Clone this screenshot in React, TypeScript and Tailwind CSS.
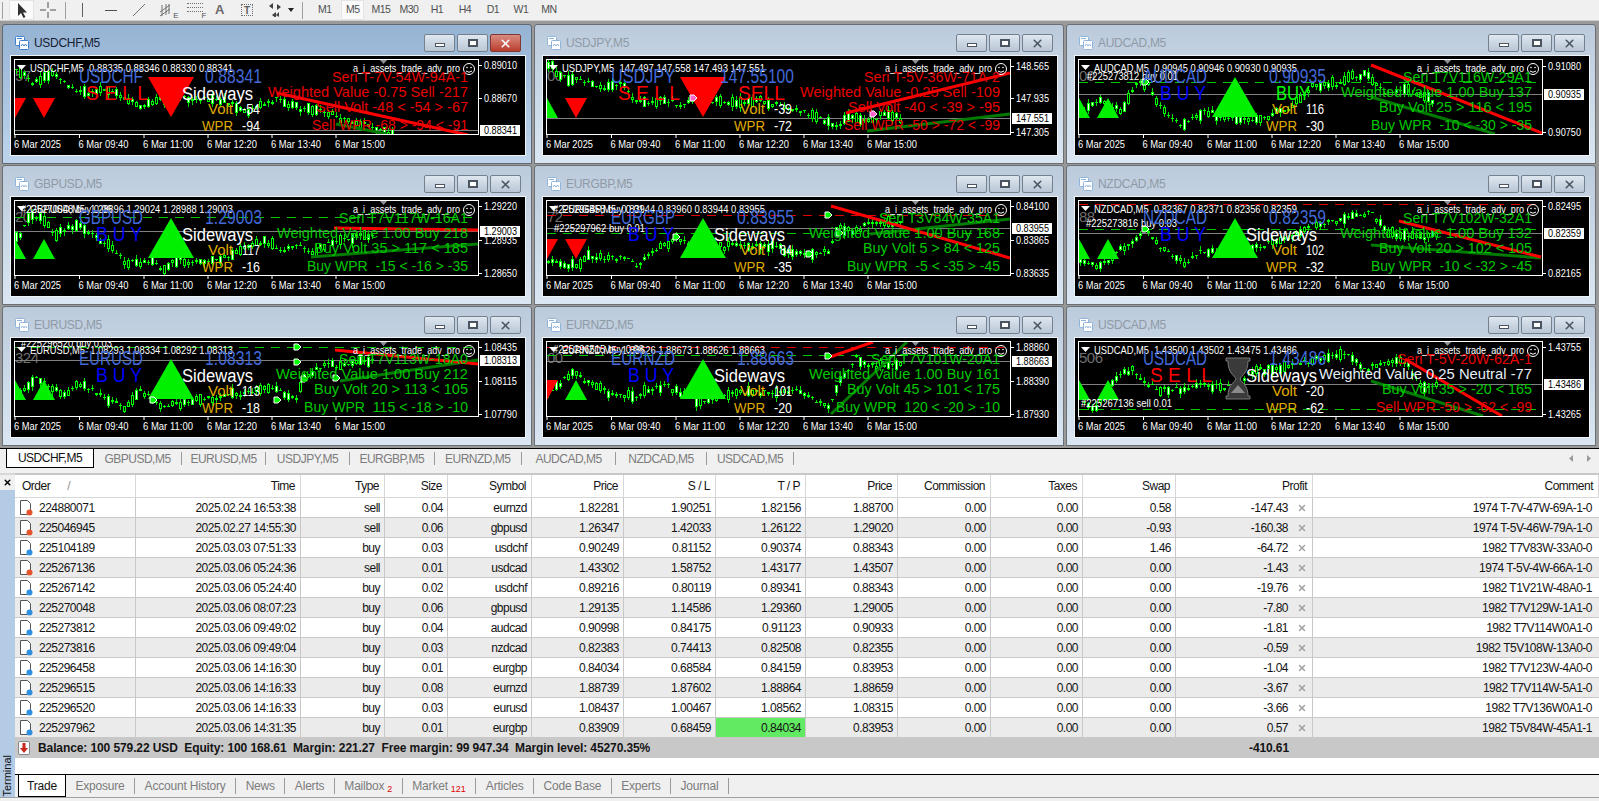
import { X } from 'lucide-react';

const RED = '#e80000';
const BUYG = '#00c800';
const GOLD = '#e0ac00';
const ROYAL = '#4169d8';
const FONT = '"Liberation Sans", Arial, sans-serif';

type Pt = [number, number];
type Line = [string, string, number];
type Seg = [number, number, number, number];
type Mark = [number, number, string];

type ChartData = {
  sym: string;
  ohlc: string;
  price: string;
  priceX?: number;
  side: 'buy' | 'sell';
  big: 'up' | 'down' | 'glass';
  small: ['up' | 'down', number, number][];
  mid?: string;
  volt: string;
  wpr: string;
  lines: Line[];
  red: Seg;
  green: Seg;
  last: number;
  dashed: [number, string][];
  axis: [string, number][];
  tag: string;
  notes: [string, number, number][];
  marks?: Mark[];
  pts: Pt[];
  seed: number;
  active?: boolean;
};

const times = ['6 Mar 2025', '6 Mar 09:40', '6 Mar 11:00', '6 Mar 12:20', '6 Mar 13:40', '6 Mar 15:00'];
const timeX = [3, 67.5, 132, 196, 260, 324];

const charts: ChartData[] = [
  {
    sym: 'USDCHF', ohlc: '0.88335 0.88346 0.88330 0.88341', price: '0.88341', side: 'sell', big: 'down', active: true,
    small: [['down', -7, 42], ['down', 22, 42]], mid: 'Sideways', volt: '-54', wpr: '-94',
    lines: [['Seri T-7V-54W-94A-1', RED, 321], ['Weighted Value -0.75 Sell -217', RED, 257], ['Sell Volt -48 < -54 > -67', RED, 305], ['Sell WPR -68 > -94 < -91', RED, 301]],
    red: [266, 37, 457, 79], green: [325, 68, 376, 78], last: 74, dashed: [],
    axis: [['0.89010', 9], ['0.88670', 42]], tag: '57', notes: [], seed: 11,
    pts: [[5, 13], [21, 28], [43, 17], [57, 33], [75, 37], [96, 35], [132, 52], [143, 42], [175, 42], [210, 45], [235, 57], [264, 43], [285, 52], [310, 55], [328, 63], [360, 72], [382, 78]],
  },
  {
    sym: 'USDJPY', ohlc: '147.497 147.558 147.493 147.551', price: '147.55100', priceX: 177, side: 'sell', big: 'down',
    small: [['up', -7, 42], ['down', 22, 42]], mid: 'SELL', volt: '-39', wpr: '-72',
    lines: [['Seri T-5V-36W-71A-2', RED, 321], ['Weighted Value -0.25 Sell -109', RED, 257], ['Sell Volt -40 < -39 > -95', RED, 305], ['Sell WPR -50 > -72 < -99', RED, 301]],
    red: [303, 57, 467, 17], green: [324, 75, 467, 58], last: 62, dashed: [],
    axis: [['148.565', 10], ['147.935', 42], ['147.305', 76]], tag: '00', notes: [], seed: 23,
    marks: [[150, 42, '#ff66cc'], [330, 58, '#ff66cc']],
    pts: [[8, 12], [22, 23], [42, 27], [60, 32], [80, 28], [91, 45], [125, 45], [137, 52], [149, 42], [173, 45], [218, 45], [252, 53], [277, 63], [294, 70], [304, 62], [325, 65], [342, 55], [359, 65]],
  },
  {
    sym: 'AUDCAD', ohlc: '0.90945 0.90946 0.90930 0.90935', price: '0.90935', side: 'buy', big: 'up',
    small: [['up', -7, 42], ['up', 22, 42]], mid: 'BUY', volt: '116', wpr: '-30',
    lines: [['Seri T7V116W-29A1', BUYG, 328], ['Weighted Value 1.00 Buy 137', BUYG, 266], ['Buy Volt 25 > 116 < 195', BUYG, 304], ['Buy WPR  -10 < -30 > -35', BUYG, 296]],
    red: [296, 9, 467, 77], green: [296, 41, 420, 78], last: 38, dashed: [[26, '#00c800']],
    axis: [['0.91080', 10], ['0.90750', 76]], tag: '00', notes: [['#225273812 buy 0.01', 12, 24]], seed: 37,
    marks: [[70, 26, '#00ff00']],
    pts: [[4, 58], [22, 45], [47, 55], [58, 28], [72, 28], [83, 50], [108, 70], [126, 55], [151, 62], [186, 62], [215, 52], [236, 30], [261, 28], [268, 22], [290, 18], [307, 37], [329, 35], [358, 45]],
  },
  {
    sym: 'GBPUSD', ohlc: '1.28896 1.29024 1.28988 1.29003', price: '1.29003', side: 'buy', big: 'up',
    small: [['up', -7, 42], ['up', 22, 42]], mid: 'Sideways', volt: '117', wpr: '-16',
    lines: [['Seri T7V117W-16A1', BUYG, 328], ['Weighted Value 1.00 Buy 218', BUYG, 266], ['Buy Volt 35 > 117 < 185', BUYG, 303], ['Buy WPR  -15 < -16 > -35', BUYG, 296]],
    red: [323, 31, 467, 33], green: [300, 60, 467, 47], last: 34, dashed: [[20, '#00c800']],
    axis: [['1.29220', 9], ['1.28935', 43], ['1.28650', 76]], tag: '20', notes: [['#225270048 buy 0.06', 10, 16]], seed: 41,
    pts: [[6, 39], [19, 19], [33, 24], [40, 37], [70, 29], [84, 41], [101, 51], [114, 66], [134, 64], [151, 72], [165, 62], [185, 67], [209, 61], [232, 52], [253, 44], [270, 54], [290, 49], [300, 57], [327, 41], [361, 39]],
  },
  {
    sym: 'EURGBP', ohlc: '0.83944 0.83960 0.83944 0.83955', price: '0.83955', side: 'buy', big: 'up',
    small: [['down', -7, 42], ['down', 22, 42]], mid: 'Sideways', volt: '84', wpr: '-35',
    lines: [['Seri T3V84W-35A1', BUYG, 336], ['Weighted Value 1.00 Buy 168', BUYG, 266], ['Buy Volt 5 > 84 < 125', BUYG, 320], ['Buy WPR  -5 < -35 > -45', BUYG, 304]],
    red: [288, 9, 467, 61], green: [327, 37, 467, 22], last: 31, dashed: [[18, '#e00000'], [36, '#00c800']],
    axis: [['0.84100', 9], ['0.83865', 43], ['0.83635', 76]], tag: '72', notes: [['#225296458 buy 0.01', 10, 16], ['#225297962 buy 0.01', 11, 35]], seed: 53,
    marks: [[133, 40, '#00ff00'], [285, 18, '#00ff00'], [296, 36, '#00ff00'], [266, 57, '#00ff00']],
    pts: [[4, 64], [31, 69], [44, 59], [82, 61], [95, 69], [105, 57], [132, 41], [142, 47], [180, 49], [230, 49], [251, 57], [284, 55], [293, 31], [312, 34], [328, 26], [359, 26]],
  },
  {
    sym: 'NZDCAD', ohlc: '0.82367 0.82371 0.82356 0.82359', price: '0.82359', side: 'buy', big: 'up',
    small: [['up', -7, 42], ['up', 22, 42]], mid: 'Sideways', volt: '102', wpr: '-32',
    lines: [['Seri T7V102W-32A1', BUYG, 328], ['Weighted Value 1.00 Buy 132', BUYG, 265], ['Buy Volt 20 > 102 < 105', BUYG, 304], ['Buy WPR  -10 < -32 > -45', BUYG, 296]],
    red: [324, 24, 466, 60], green: [296, 48, 466, 61], last: 36, dashed: [[7, '#e00000'], [32, '#00c800']],
    axis: [['0.82495', 9], ['0.82165', 76]], tag: '88', notes: [['#225273816 buy 0.03', 11, 30]], seed: 67,
    marks: [[70, 32, '#00ff00']],
    pts: [[4, 66], [19, 69], [33, 62], [54, 46], [71, 32], [85, 51], [109, 66], [126, 54], [178, 51], [212, 41], [236, 27], [270, 22], [296, 16], [312, 37], [343, 41], [363, 36]],
  },
  {
    sym: 'EURUSD', ohlc: '1.08293 1.08334 1.08292 1.08313', price: '1.08313', side: 'buy', big: 'up',
    small: [['up', -7, 42], ['up', 22, 42]], mid: 'Sideways', volt: '113', wpr: '-18',
    lines: [['Seri T7V113W-18A0', BUYG, 328], ['Weighted Value 1.00 Buy 212', BUYG, 265], ['Buy Volt 20 > 113 < 105', BUYG, 303], ['Buy WPR  115 < -18 > -10', BUYG, 293]],
    red: [324, 12, 467, 26], green: [329, 43, 467, 22], last: 22, dashed: [[9, '#00c800']],
    axis: [['1.08435', 9], ['1.08115', 43], ['1.07790', 76]], tag: '324', notes: [['#225296520 buy 0.03', 10, 9]], seed: 71,
    marks: [[286, 9, '#00ff00'], [286, 24, '#00ff00'], [293, 41, '#00ff00'], [325, 40, '#00ff00'], [142, 62, '#00ff00'], [266, 62, '#00ff00']],
    pts: [[6, 56], [23, 40], [33, 46], [50, 56], [70, 46], [101, 63], [114, 70], [128, 53], [151, 68], [192, 61], [226, 56], [259, 51], [286, 61], [290, 40], [313, 26], [327, 30], [361, 20]],
  },
  {
    sym: 'EURNZD', ohlc: '1.88626 1.88673 1.88626 1.88663', price: '1.88663', side: 'buy', big: 'up',
    small: [['down', -7, 42], ['up', 22, 42]], mid: 'Sideways', volt: '101', wpr: '-20',
    lines: [['Seri T7V101W-20A1', BUYG, 328], ['Weighted Value 1.00 Buy 161', BUYG, 266], ['Buy Volt 45 > 101 < 175', BUYG, 304], ['Buy WPR  120 < -20 > -10', BUYG, 293]],
    red: [287, 19, 330, 4], green: [288, 76, 364, 4], last: 23, dashed: [[9, '#e00000'], [17, '#00c800']],
    axis: [['1.88860', 9], ['1.88390', 43], ['1.87930', 76]], tag: '00', notes: [['#225296515 buy 0.08', 10, 15]], seed: 83,
    marks: [[285, 18, '#00ff00']],
    pts: [[14, 46], [28, 35], [51, 48], [68, 56], [95, 60], [105, 50], [122, 48], [156, 63], [190, 55], [257, 54], [284, 70], [291, 51], [312, 20], [328, 28], [359, 25]],
  },
  {
    sym: 'USDCAD', ohlc: '1.43500 1.43502 1.43475 1.43486', price: '1.43486', side: 'sell', big: 'glass',
    small: [['up', -7, 42], ['up', 22, 42]], mid: 'Sideways', volt: '-20', wpr: '-62',
    lines: [['Seri T-5V-20W-62A-1', RED, 322], ['Weighted Value 0.25 Neutral -77', '#e6eef8', 244], ['Buy Volt 35 > -20 < 165', BUYG, 307], ['Sell WPR -50 > -62 < -99', RED, 301]],
    red: [330, 21, 427, 78], green: [296, 43, 408, 78], last: 46, dashed: [[71, '#00c800']],
    axis: [['1.43755', 9], ['1.43265', 76]], tag: '506', notes: [['#225267136 sell 0.01', 6, 69]], seed: 97,
    pts: [[6, 62], [19, 72], [37, 41], [57, 31], [71, 48], [92, 53], [122, 48], [157, 48], [177, 33], [226, 26], [267, 13], [288, 31], [301, 27], [329, 23], [343, 48], [363, 48]],
  },
];

function Candles({ pts, seed }: { pts: Pt[]; seed: number }) {
  let s = seed;
  const rnd = () => {
    s = (s * 16807) % 2147483647;
    return (s % 1000) / 1000;
  };
  const at = (x: number) => {
    for (let i = 1; i < pts.length; i++) {
      if (x <= pts[i][0]) {
        const [x0, y0] = pts[i - 1];
        const [x1, y1] = pts[i];
        return y0 + ((x - x0) / (x1 - x0)) * (y1 - y0);
      }
    }
    return pts[pts.length - 1][1];
  };
  const bars = [];
  for (let x = 4; x <= pts[pts.length - 1][0]; x += 4) {
    const y = at(x) + (rnd() - 0.5) * 5;
    const r = rnd();
    const len = 1 + r * r * 10;
    const up = rnd() > 0.45;
    const top = Math.round(y - len / 2);
    const h = Math.max(1, Math.round(len));
    const hi = top - Math.round(rnd() * 4);
    const lo = top + h + Math.round(rnd() * 4);
    bars.push(
      <g key={x}>
        <rect x={x + 1} y={hi} width={1} height={lo - hi} fill="#00e000" />
        <rect x={x} y={top} width={3} height={h} fill="#00ff00" />
        {h > 2 && <rect x={x + 1} y={top + 1} width={1} height={h - 2} fill={up ? '#ffffff' : '#000000'} />}
      </g>
    );
  }
  return <g shapeRendering="crispEdges">{bars}</g>;
}

function Label(props: { x: number; y: number; w: number; size: number; fill: string; children: string }) {
  return (
    <text
      x={props.x}
      y={props.y}
      textLength={props.w}
      lengthAdjust="spacingAndGlyphs"
      fontSize={props.size}
      fill={props.fill}
      className="whitespace-pre tracking-normal"
      style={{ fontFamily: FONT }}
    >
      {props.children}
    </text>
  );
}

function Tri({ dir, x, y, w, h }: { dir: 'up' | 'down'; x: number; y: number; w: number; h: number }) {
  const pts = dir === 'up' ? `${x},${y + h} ${x + w / 2},${y} ${x + w},${y + h}` : `${x},${y} ${x + w},${y} ${x + w / 2},${y + h}`;
  return <polygon points={pts} fill={dir === 'up' ? '#00f000' : '#ff0000'} />;
}

function Chart({ d }: { d: ChartData }) {
  const clip = `plot-${d.sym}`;
  const buy = d.side === 'buy';
  return (
    <svg width={514} height={99} viewBox="0 0 514 99" className="block bg-black outline outline-[#eef3f8]">
      <defs>
        <clipPath id={clip}>
          <rect x={4} y={3} width={463} height={75} />
        </clipPath>
      </defs>
      <g clipPath={`url(#${clip})`}>
        <text x={4} y={25} fontSize={15} fill="#6f6f6f" style={{ fontFamily: FONT }}>{d.tag}</text>
        <line x1={4} x2={467} y1={d.last + 0.5} y2={d.last + 0.5} stroke="#808080" />
        {d.dashed.map(([y, c]) => (
          <line key={y} x1={4} x2={467} y1={y + 0.5} y2={y + 0.5} stroke={c} strokeDasharray="9 7" />
        ))}
        <Candles pts={d.pts} seed={d.seed} />
        <line x1={d.green[0]} y1={d.green[1]} x2={d.green[2]} y2={d.green[3]} stroke="#007a00" strokeWidth={3} />
        <line x1={d.red[0]} y1={d.red[1]} x2={d.red[2]} y2={d.red[3]} stroke="#ff0000" strokeWidth={3} />
        {d.small.map(([dir, x, y], i) => (
          <Tri key={i} dir={dir} x={x} y={y} w={22} h={20} />
        ))}
        {d.big === 'glass' ? (
          <g fill="#3a3a3a" stroke="#777777" strokeWidth={1}>
            <path d="M151 20h24v3h-2c0 12-6 14-8 18 2 4 8 6 8 17h2v3h-24v-3h2c0-11 6-13 8-17-2-4-8-6-8-18h-2z" />
            <path d="M156 55l7-8 7 8z" fill="#8a8a8a" stroke="none" />
          </g>
        ) : (
          <Tri dir={d.big} x={137} y={21} w={46} h={40} />
        )}
        <polygon points="6,9 15,9 10.5,14" fill="#ffffff" />
        {d.marks?.map(([x, y, c], i) => (
          <polygon key={i} points={`${x - 3},${y - 3} ${x + 1},${y - 3} ${x + 4},${y} ${x + 1},${y + 3} ${x - 3},${y + 3}`} fill={c} stroke="#ffffff" />
        ))}
        {d.notes.map(([t, x, y]) => (
          <Label key={t} x={x} y={y} w={91} size={11} fill="#ffffff">{t}</Label>
        ))}
        <Label x={19} y={16} w={203} size={11} fill="#ffffff">{`${d.sym},M5  ${d.ohlc}`}</Label>
        <Label x={342} y={16} w={107} size={11} fill="#ffffff">a_i_assets_trade_adv_pro</Label>
        <polygon points="368,3 377,3 372.5,8" fill="#8a9098" />
        <rect x={448} y={3} width={2} height={1} fill="#ff3090" />
        <circle cx={458} cy={13} r={5.5} fill="none" stroke="#ffffff" />
        <circle cx={456} cy={11.5} r={0.8} fill="#ffffff" />
        <circle cx={460} cy={11.5} r={0.8} fill="#ffffff" />
        <path d="M455 15q3 2.5 6 0" fill="none" stroke="#ffffff" />

        <Label x={68} y={27} w={64} size={20} fill={ROYAL}>{d.sym}</Label>
        <Label x={d.priceX ?? 194} y={27} w={d.priceX ? 74 : 57} size={20} fill={ROYAL}>{d.price}</Label>
        {buy ? (
          <Label x={85} y={44} w={46} size={20} fill="#0000ff">B U Y</Label>
        ) : (
          <Label x={75} y={44} w={62} size={20} fill="#ff0000">S E L L</Label>
        )}
        {d.mid === 'Sideways' && <Label x={171} y={44} w={71} size={18} fill="#ffffff">Sideways</Label>}
        {d.mid === 'SELL' && <Label x={195} y={44} w={47} size={20} fill="#ff0000">SELL</Label>}
        {d.mid === 'BUY' && <Label x={201} y={44} w={34} size={20} fill="#00ff00">BUY</Label>}
        <Label x={197} y={58} w={25} size={15} fill={GOLD}>Volt</Label>
        <Label x={249 - d.volt.length * 6} y={58} w={d.volt.length * 6} size={15} fill="#ffffff">{d.volt}</Label>
        <Label x={191} y={75} w={31} size={15} fill={GOLD}>WPR</Label>
        <Label x={249 - d.wpr.length * 6} y={75} w={d.wpr.length * 6} size={15} fill="#ffffff">{d.wpr}</Label>
        {d.lines.map(([t, c, x], i) => (
          <Label key={i} x={x} y={[26, 41, 55.5, 74][i]} w={457 - x} size={15} fill={c}>{t}</Label>
        ))}
      </g>
      <rect x={3.5} y={3.5} width={464} height={75} fill="none" stroke="#ffffff" />
      {timeX.map((x, i) => (
        <g key={x}>
          <line x1={x + 1} x2={x + 1} y1={79} y2={82} stroke="#ffffff" />
          <Label x={x} y={92} w={i === 0 ? 47 : 50} size={11} fill="#ffffff">{times[i]}</Label>
        </g>
      ))}
      {d.axis.map(([t, y]) => (
        <g key={t}>
          <line x1={468} x2={471} y1={y + 0.5} y2={y + 0.5} stroke="#ffffff" />
          <Label x={473} y={y + 4} w={33} size={11} fill="#ffffff">{t}</Label>
        </g>
      ))}
      <rect x={469} y={d.last - 5} width={40} height={11} fill="#ffffff" />
      <Label x={473} y={d.last + 4} w={33} size={11} fill="#000000">{d.price.slice(0, 7)}</Label>
    </svg>
  );
}

function WinIcon({ active }: { active?: boolean }) {
  const c = active ? '#3d7fd0' : '#8fb4dc';
  return (
    <svg width={14} height={14} viewBox="0 0 14 14" className="shrink-0">
      <rect x={0.5} y={0.5} width={9} height={9} rx={1} fill="#ffffff" stroke={c} />
      <rect x={4.5} y={4.5} width={9} height={9} rx={1} fill="#ffffff" stroke={c} />
      <path d="M6 10l1.5-2 1.5 2 1.5-2 1.5 2" fill="none" stroke={c} />
      <path d="M2 2.5h5" stroke={c} />
    </svg>
  );
}

function WinButton({ kind, active }: { kind: 'min' | 'max' | 'close'; active?: boolean }) {
  const red = kind === 'close' && active;
  return (
    <div
      className={
        red
          ? 'w-[31px] h-[18px] flex items-center justify-center rounded-[2px] border border-[#7d3a34] bg-linear-to-b from-[#d98a7f] to-[#b93c2e]'
          : 'w-[31px] h-[18px] flex items-center justify-center rounded-[2px] border border-[#75808d] bg-linear-to-b from-[#dfe7f0] to-[#b9c6d5]'
      }
    >
      {kind === 'min' && <div className="w-[10px] h-[4px] mt-[4px] bg-white border border-[#4a5561]" />}
      {kind === 'max' && <div className="w-[10px] h-[8px] bg-white border-2 border-[#4a5561]" />}
      {kind === 'close' && <X size={13} strokeWidth={3} className={red ? 'text-white' : 'text-[#4a5561]'} />}
    </div>
  );
}

function ChartWindow({ d }: { d: ChartData }) {
  return (
    <div
      className={
        d.active
          ? 'h-[140px] flex flex-col border border-[#5f6770] rounded-t-[3px] bg-linear-to-b from-[#96b3d3] to-[#bdd4ec] pl-[8px] pr-[6px] pb-[8px]'
          : 'h-[140px] flex flex-col border border-[#6a6f75] rounded-t-[3px] bg-linear-to-b from-[#bccbdc] to-[#dae6f2] pl-[8px] pr-[6px] pb-[8px]'
      }
    >
      <div className="h-[31px] flex items-center gap-[5px] pl-[4px] pr-[4px] pb-[3px] pt-[8px]">
        <WinIcon active={d.active} />
        <span className={d.active ? 'text-[12px] tracking-[-0.3px] text-[#152033]' : 'text-[12px] tracking-[-0.3px] text-[#8f9aa6]'}>{d.sym},M5</span>
        <div className="ml-auto flex gap-[2px]">
          <WinButton kind="min" />
          <WinButton kind="max" />
          <WinButton kind="close" active={d.active} />
        </div>
      </div>
      <Chart d={d} />
    </div>
  );
}

function Toolbar() {
  const periods = ['M1', 'M5', 'M15', 'M30', 'H1', 'H4', 'D1', 'W1', 'MN'];
  return (
    <div className="h-[21px] shrink-0 flex items-center bg-[#f0f0f0] text-[#505050] border-b border-[#d0d0d0]">
      <div className="w-[1px] h-[17px] ml-[2px] bg-[#a0a0a0]" />
      <div className="ml-[6px] w-[25px] h-[20px] flex items-center justify-center bg-[#fafafa] border border-[#e4e4e4]">
        <svg width={12} height={15} viewBox="0 0 12 15"><path d="M2 0v13l3-3 2.5 5 2-1-2.5-4.5h4z" fill="#303030" /></svg>
      </div>
      <svg width={16} height={16} viewBox="0 0 16 16" className="ml-[6px]"><path d="M8 0v6M8 10v6M0 8h6M10 8h6" stroke="#505050" /></svg>
      <div className="ml-[9px] w-[1px] h-[17px] bg-[#a0a0a0]" />
      <div className="ml-[16px] w-[1px] h-[14px] bg-[#606060]" />
      <div className="ml-[22px] w-[12px] h-[1px] bg-[#505050]" />
      <svg width={14} height={14} viewBox="0 0 14 14" className="ml-[15px]"><path d="M1 13L13 1" stroke="#707070" /></svg>
      <div className="ml-[13px] relative w-[16px] h-[14px]">
        <svg width={13} height={14} viewBox="0 0 13 14"><path d="M1 9l10-7M1 13L11 6M3 2v11M7 1v11M10 1v10" stroke="#707070" /></svg>
        <span className="absolute right-[-3px] bottom-[-3px] text-[8px] leading-none">E</span>
      </div>
      <div className="ml-[12px] relative w-[16px] h-[14px] border-t border-dotted border-[#707070]">
        <div className="mt-[3px] border-t border-dotted border-[#707070]" />
        <div className="mt-[3px] border-t border-dotted border-[#707070]" />
        <span className="absolute right-[-3px] bottom-[-3px] text-[8px] leading-none">F</span>
      </div>
      <span className="ml-[12px] text-[13px] font-bold text-[#6a6a6a]">A</span>
      <span className="ml-[17px] w-[12px] h-[12px] flex items-center justify-center border border-dotted border-[#707070] text-[10px] font-bold text-[#606060]">T</span>
      <svg width={14} height={14} viewBox="0 0 14 14" className="ml-[15px]"><path d="M1 3l4-3v6zM13 4l-4 3v-6zM4 12l4-3v6zM11 9l-3 3 3 2z" fill="#404040" /></svg>
      <svg width={6} height={4} viewBox="0 0 6 4" className="ml-[6px]"><path d="M0 0h6L3 4z" fill="#202020" /></svg>
      <div className="ml-[8px] w-[1px] h-[17px] bg-[#a0a0a0]" />
      <div className="ml-[8px] flex items-center text-[10.5px]">
        {periods.map((p) => (
          <div key={p} className={p === 'M5' ? 'w-[23px] mx-[2.5px] h-[20px] flex items-center justify-center bg-[#fafafa] border border-[#e4e4e4]' : 'w-[23px] mx-[2.5px] h-[20px] flex items-center justify-center'}>
            {p}
          </div>
        ))}
      </div>
    </div>
  );
}

function ChartTabs() {
  const tabs: [string, string][] = [
    ['GBPUSD,M5', 'w-[88px]'],
    ['EURUSD,M5', 'w-[84px]'],
    ['USDJPY,M5', 'w-[84px]'],
    ['EURGBP,M5', 'w-[84.5px]'],
    ['EURNZD,M5', 'w-[87.5px]'],
    ['AUDCAD,M5', 'w-[94px]'],
    ['NZDCAD,M5', 'w-[91px]'],
    ['USDCAD,M5', 'w-[87px]'],
  ];
  return (
    <div className="h-[25px] shrink-0 flex items-start bg-[#f0f0f0] border-t border-black">
      <div className="ml-[6px] w-[88px] h-[19px] flex items-center justify-center bg-white border-x border-b border-black text-[#111]">USDCHF,M5</div>
      {tabs.map(([t, w]) => (
        <div key={t} className={`${w} h-[19px] flex items-center justify-center`}>
          <span className="flex-1 text-center text-[#7c7c7c]">{t}</span>
          <span className="w-[1px] h-[13px] bg-[#9a9a9a]" />
        </div>
      ))}
      <div className="ml-auto mr-[8px] h-[19px] flex items-center gap-[14px]">
        <svg width={4} height={7} viewBox="0 0 4 7"><path d="M4 0v7L0 3.5z" fill="#9a9a9a" /></svg>
        <svg width={4} height={7} viewBox="0 0 4 7"><path d="M0 0v7l4-3.5z" fill="#9a9a9a" /></svg>
      </div>
    </div>
  );
}

const grid = 'grid grid-cols-[121px_165px_84px_63px_84px_92px_92px_90px_92px_93px_92px_93px_137px_1fr]';
const heads = ['Order', 'Time', 'Type', 'Size', 'Symbol', 'Price', 'S / L', 'T / P', 'Price', 'Commission', 'Taxes', 'Swap', 'Profit', 'Comment'];

type Row = [string, string, 'buy' | 'sell', string, string, string, string, string, string, string, string, string];

const rows: Row[] = [
  ['224880071', '2025.02.24 16:53:38', 'sell', '0.04', 'eurnzd', '1.82281', '1.90251', '1.82156', '1.88700', '0.58', '-147.43', '1974 T-7V-47W-69A-1-0'],
  ['225046945', '2025.02.27 14:55:30', 'sell', '0.06', 'gbpusd', '1.26347', '1.42033', '1.26122', '1.29020', '-0.93', '-160.38', '1974 T-5V-46W-79A-1-0'],
  ['225104189', '2025.03.03 07:51:33', 'buy', '0.03', 'usdchf', '0.90249', '0.81152', '0.90374', '0.88343', '1.46', '-64.72', '1982 T7V83W-33A0-0'],
  ['225267136', '2025.03.06 05:24:36', 'sell', '0.01', 'usdcad', '1.43302', '1.58752', '1.43177', '1.43507', '0.00', '-1.43', '1974 T-5V-4W-66A-1-0'],
  ['225267142', '2025.03.06 05:24:40', 'buy', '0.02', 'usdchf', '0.89216', '0.80119', '0.89341', '0.88343', '0.00', '-19.76', '1982 T1V21W-48A0-1'],
  ['225270048', '2025.03.06 08:07:23', 'buy', '0.06', 'gbpusd', '1.29135', '1.14586', '1.29360', '1.29005', '0.00', '-7.80', '1982 T7V129W-1A1-0'],
  ['225273812', '2025.03.06 09:49:02', 'buy', '0.04', 'audcad', '0.90998', '0.84175', '0.91123', '0.90933', '0.00', '-1.81', '1982 T7V114W0A1-0'],
  ['225273816', '2025.03.06 09:49:04', 'buy', '0.03', 'nzdcad', '0.82383', '0.74413', '0.82508', '0.82355', '0.00', '-0.59', '1982 T5V108W-13A0-0'],
  ['225296458', '2025.03.06 14:16:30', 'buy', '0.01', 'eurgbp', '0.84034', '0.68584', '0.84159', '0.83953', '0.00', '-1.04', '1982 T7V123W-4A0-0'],
  ['225296515', '2025.03.06 14:16:33', 'buy', '0.08', 'eurnzd', '1.88739', '1.87602', '1.88864', '1.88659', '0.00', '-3.67', '1982 T7V114W-5A1-0'],
  ['225296520', '2025.03.06 14:16:33', 'buy', '0.03', 'eurusd', '1.08437', '1.00467', '1.08562', '1.08315', '0.00', '-3.66', '1982 T7V136W0A1-0'],
  ['225297962', '2025.03.06 14:31:35', 'buy', '0.01', 'eurgbp', '0.83909', '0.68459', '0.84034', '0.83953', '0.00', '0.57', '1982 T5V84W-45A1-1'],
];

function OrderIcon({ type }: { type: 'buy' | 'sell' }) {
  return (
    <svg width={15} height={16} viewBox="0 0 15 16" className="shrink-0">
      <path d="M1.5 0.5h7l3 3v11h-10z" fill="#ffffff" stroke="#555555" />
      <circle cx={10.5} cy={12.5} r={3} fill={type === 'buy' ? '#2f8fe0' : '#e5532a'} />
    </svg>
  );
}

function Cell({ children, className }: { children: React.ReactNode; className?: string }) {
  return <div className={`h-[20px] flex items-center justify-end pr-[4px] border-r border-b border-[#c8c8c8] ${className ?? ''}`}>{children}</div>;
}

function TradeTable() {
  return (
    <div className="text-[#141414]">
      <div className={`${grid} h-[25px] bg-white border-t-2 border-[#c8c8c8]`}>
        {heads.map((h, i) => (
          <div key={i} className={i === 0 ? 'flex items-center pl-[7px] gap-[17px] border-r border-b border-[#d8d8d8]' : 'flex items-center justify-end pr-[5px] border-r border-b border-[#d8d8d8]'}>
            {h}
            {i === 0 && <span className="text-[#909090]">/</span>}
          </div>
        ))}
      </div>
      {rows.map((r, i) => (
        <div key={r[0]} className={i % 2 === 1 ? `${grid} bg-[#ebebeb]` : `${grid} bg-white`}>
          <Cell className="justify-start pl-[4px] gap-[5px]">
            <OrderIcon type={r[2]} />
            {r[0]}
          </Cell>
          <Cell>{r[1]}</Cell>
          <Cell>{r[2]}</Cell>
          <Cell>{r[3]}</Cell>
          <Cell>{r[4]}</Cell>
          <Cell>{r[5]}</Cell>
          <Cell>{r[6]}</Cell>
          <Cell className={i === 11 ? 'bg-[#62ea62]' : ''}>{r[7]}</Cell>
          <Cell>{r[8]}</Cell>
          <Cell>0.00</Cell>
          <Cell>0.00</Cell>
          <Cell>{r[9]}</Cell>
          <Cell className="pr-[5px]">
            {r[10]}
            <X size={10} strokeWidth={3.5} className="ml-[9px] text-[#a0a0a0]" />
          </Cell>
          <Cell className="pr-[7px] border-r-0">{r[11]}</Cell>
        </div>
      ))}
      <div className={`${grid} h-[20px] bg-[#c8c8c8] font-bold tracking-[-0.1px]`}>
        <div className="col-span-12 flex items-center pl-[3px] gap-[8px]">
          <div className="w-[12px] h-[14px] flex items-center justify-center bg-white border border-[#888888] rounded-[2px]">
            <svg width={8} height={10} viewBox="0 0 8 10"><path d="M2.5 0h3v5H8L4 10 0 5h2.5z" fill="#c8261a" /></svg>
          </div>
          <span className="whitespace-pre">Balance: 100 579.22 USD  Equity: 100 168.61  Margin: 221.27  Free margin: 99 947.34  Margin level: 45270.35%</span>
        </div>
        <div className="flex items-center justify-end pr-[24px]">-410.61</div>
        <div />
      </div>
    </div>
  );
}

function TerminalTabs() {
  const tabs: [string, string?][] = [['Exposure'], ['Account History'], ['News'], ['Alerts'], ['Mailbox', '2'], ['Market', '121'], ['Articles'], ['Code Base'], ['Experts'], ['Journal']];
  return (
    <div className="h-[23px] flex items-stretch border-t border-black bg-[#f0f0f0] text-[#7c7c7c] tracking-[-0.2px]">
      <div className="ml-[3px] w-[48px] -mt-[1px] flex items-center justify-center bg-white border border-black text-[#111]">Trade</div>
      {tabs.map(([t, n]) => (
        <div key={t} className="flex items-center px-[9.5px] my-[3px] border-r border-[#9a9a9a]">
          {t}
          {n && <span className="text-[#e00000] text-[9px] ml-[3px] mt-[8px] tracking-normal">{n}</span>}
        </div>
      ))}
    </div>
  );
}

export default function App() {
  return (
    <div className="w-[1599px] h-[801px] overflow-hidden flex flex-col bg-[#f0f0f0] text-[12px] tracking-[-0.5px]" style={{ fontFamily: FONT }}>
      <Toolbar />
      <div className="shrink-0 h-[427px] grid grid-cols-[530px_530px_530px] gap-x-[2px] gap-y-[1px] content-start pl-[2px] pt-[3px] bg-[#9a9a9a]">
        {charts.map((c) => (
          <ChartWindow key={c.sym} d={c} />
        ))}
      </div>
      <ChartTabs />
      <div className="flex-1 flex min-h-0">
        <div className="w-[15px] shrink-0 flex flex-col bg-[#f0f0f0] border-t-2 border-[#d8d8d8]">
          <div className="h-[15px] flex items-center justify-center">
            <X size={9} strokeWidth={4} className="text-black" />
          </div>
          <div className="flex-1 flex items-end justify-center bg-[#b4cbe6]">
            <span className="[writing-mode:vertical-rl] rotate-180 pb-[4px] text-[11px] tracking-normal text-[#111]">Terminal</span>
          </div>
        </div>
        <div className="flex-1 flex flex-col min-w-0">
          <TradeTable />
          <div className="flex-1 bg-white" />
          <TerminalTabs />
        </div>
      </div>
      <div className="h-[4px] shrink-0 bg-[#f0f0f0] border-t border-[#a0a0a0]" />
    </div>
  );
}
